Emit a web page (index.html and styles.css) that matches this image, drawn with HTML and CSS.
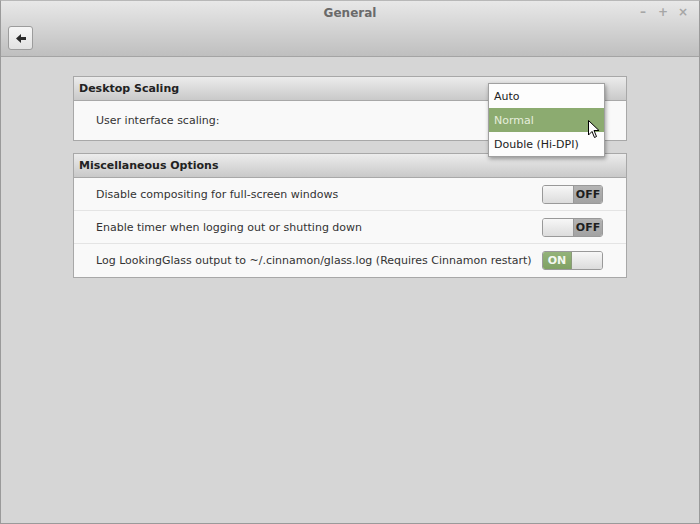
FILE: index.html
```html
<!DOCTYPE html>
<html lang="en">
<head>
    <meta charset="UTF-8">
    <meta name="viewport" content="width=device-width, initial-scale=1.0">
    <title>General</title>
    <link rel="stylesheet" href="styles.css">
</head>
<body>
    <div class="window">
        <!-- Title bar and toolbar -->
        <div class="header">
            <div class="titlebar">
                <span class="title">General</span>
                <div class="wm-buttons">
                    <span class="wm-btn">&#8211;</span>
                    <span class="wm-btn">+</span>
                    <span class="wm-btn">&#215;</span>
                </div>
            </div>
            <div class="toolbar">
                <button class="back-button">
                    <svg width="10" height="9" viewBox="0 0 10 9"><path d="M0 4.5 L5 0 V3 H10 V6 H5 V9 Z" fill="#2a2a2a"/></svg>
                </button>
            </div>
        </div>

        <div class="content">
            <!-- Desktop Scaling -->
            <div class="section">
                <div class="section-title">Desktop Scaling</div>
                <div class="row row-tall">
                    <span>User interface scaling:</span>
                </div>
            </div>

            <!-- Miscellaneous Options -->
            <div class="section">
                <div class="section-title">Miscellaneous Options</div>
                <div class="row">
                    <span>Disable compositing for full-screen windows</span>
                    <div class="switch">
                        <span class="knob"></span>
                        <span class="state off">OFF</span>
                    </div>
                </div>
                <div class="row">
                    <span>Enable timer when logging out or shutting down</span>
                    <div class="switch">
                        <span class="knob"></span>
                        <span class="state off">OFF</span>
                    </div>
                </div>
                <div class="row">
                    <span>Log LookingGlass output to ~/.cinnamon/glass.log (Requires Cinnamon restart)</span>
                    <div class="switch">
                        <span class="state on">ON</span>
                        <span class="knob"></span>
                    </div>
                </div>
            </div>
        </div>

        <!-- Open combo box menu -->
        <div class="menu">
            <div class="menu-item">Auto</div>
            <div class="menu-item selected">Normal</div>
            <div class="menu-item">Double (Hi-DPI)</div>
        </div>

        <svg class="cursor" width="12" height="19" viewBox="0 0 12 19">
            <path d="M0.5 0.5 V15 L4 11.5 L6.5 17.5 L8.5 16.5 L6 10.5 H11 Z" fill="#fff" stroke="#000" stroke-width="1"/>
        </svg>
    </div>
</body>
</html>
```

FILE: styles.css
```css
/* Basic Reset */
* {
    margin: 0;
    padding: 0;
    box-sizing: border-box;
}

body {
    font-family: 'DejaVu Sans', sans-serif;
    font-size: 11px;
    color: #333;
    background-color: #d6d6d6;
}

.window {
    position: relative;
    width: 700px;
    height: 524px;
    background-color: #d6d6d6;
    border: 1px solid #9a9a9a;
    border-top-color: #b8b8b8;
}

/* Header */
.header {
    height: 56px;
    background: linear-gradient(#e8e8e8, #bfbfbf);
    border-bottom: 1px solid #a4a4a4;
}

.titlebar {
    position: relative;
    height: 23px;
    display: flex;
    align-items: center;
    justify-content: center;
}

.title {
    font-weight: bold;
    font-size: 12px;
    color: #6a6a6a;
}

.wm-buttons {
    position: absolute;
    right: 10px;
    top: 4px;
    display: flex;
    gap: 8px;
}

.wm-btn {
    width: 12px;
    text-align: center;
    font-size: 12px;
    font-weight: bold;
    color: #a6a6a6;
}

.toolbar {
    padding: 2px 7px;
}

.back-button {
    width: 25px;
    height: 24px;
    display: flex;
    align-items: center;
    justify-content: center;
    border: 1px solid #9c9c9c;
    border-radius: 3px;
    background: linear-gradient(#f6f6f6, #e2e2e2);
}

/* Content */
.content {
    padding: 19px 72px 0 72px;
}

.section {
    border: 1px solid #a8a8a8;
    background-color: #f9f9f9;
    margin-bottom: 12px;
}

.section-title {
    height: 24px;
    padding: 0 5px;
    display: flex;
    align-items: center;
    font-weight: bold;
    color: #222;
    background: linear-gradient(#ececec, #c9c9c9);
    border-bottom: 1px solid #a8a8a8;
}

.row {
    height: 33px;
    padding: 0 23px 0 22px;
    display: flex;
    align-items: center;
    justify-content: space-between;
    white-space: nowrap;
    color: #333;
    border-bottom: 1px solid #e4e4e4;
}

.row:last-child {
    border-bottom: none;
}

.row-tall {
    height: 39px;
}

/* Switches */
.switch {
    width: 61px;
    height: 19px;
    display: flex;
    border: 1px solid #999;
    border-radius: 3px;
    overflow: hidden;
}

.knob {
    flex: 1;
    background: linear-gradient(#f7f7f7, #dcdcdc);
}

.state {
    width: 29px;
    display: flex;
    align-items: center;
    justify-content: center;
    font-size: 11px;
    font-weight: bold;
}

.state.off {
    background: linear-gradient(#b4b4b4, #a2a2a2);
    color: #1e1e1e;
    border-left: 1px solid #999;
}

.state.on {
    background: linear-gradient(#94b37a, #7fa163);
    color: #f4f8f0;
    border-right: 1px solid #8a9a7a;
}

/* Combo menu */
.menu {
    position: absolute;
    left: 487px;
    top: 82px;
    width: 117px;
    background-color: #fdfdfd;
    border: 1px solid #a0a0a0;
    box-shadow: 1px 2px 4px rgba(0, 0, 0, 0.35);
}

.menu-item {
    height: 24px;
    padding: 0 5px;
    display: flex;
    align-items: center;
    color: #222;
}

.menu-item.selected {
    background-color: #8cab70;
    color: #e6eedc;
}

.cursor {
    position: absolute;
    left: 587px;
    top: 119px;
}
```
